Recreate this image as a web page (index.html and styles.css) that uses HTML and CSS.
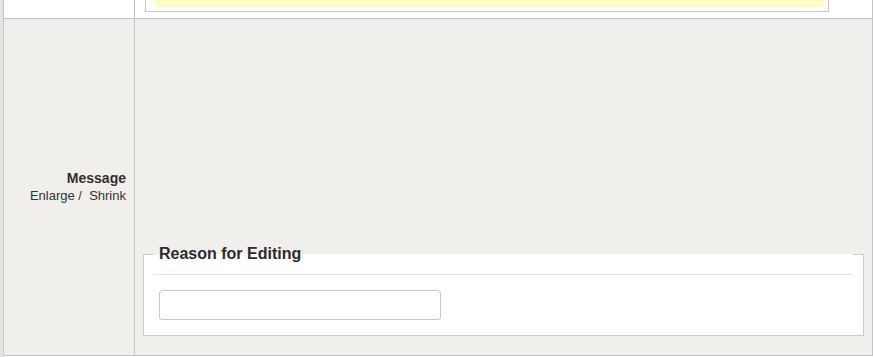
FILE: index.html
```html
<!DOCTYPE html>
<html lang="en">
<head>
<meta charset="utf-8">
<title>Edit post</title>
<link rel="stylesheet" href="styles.css">
</head>
<body>
<div class="form-table">
  <div class="row row-top">
    <div class="label-cell"></div>
    <div class="field-cell">
      <div class="notice-box">
        <div class="notice">Allowed file types <span class="hint">(jpg)</span></div>
      </div>
    </div>
  </div>
  <div class="row row-message">
    <div class="label-cell">
      <div class="label-title">Message</div>
      <div class="size-links"><a class="size-link" href="#">Enlarge</a> /&nbsp; <a class="size-link" href="#">Shrink</a></div>
    </div>
    <div class="field-cell">
      <div class="editor"></div>
      <fieldset class="reason">
        <legend class="reason-legend">Reason for Editing</legend>
        <input class="reason-input" type="text">
      </fieldset>
    </div>
  </div>
</div>
</body>
</html>
```

FILE: styles.css
```css
html, body {
  margin: 0;
  padding: 0;
}

body {
  background: #ffffff;
  font-family: "Liberation Sans", Arial, Helvetica, sans-serif;
  color: #333333;
  width: 873px;
  height: 357px;
  overflow: hidden;
  border-left: 3px solid #e4e4e4;
  box-sizing: border-box;
}

.form-table {
  width: 870px;
  box-sizing: border-box;
  border-left: 1px solid #c4c4c4;
  border-right: 1px solid #c4c4c4;
}

.row {
  display: flex;
  border-bottom: 1px solid #c4c4c4;
}

.label-cell {
  width: 130px;
  flex: none;
  border-right: 1px solid #c4c4c4;
  box-sizing: content-box;
}

.field-cell {
  flex: 1;
  min-width: 0;
}

/* top row (scrolled partially out of view) */
.row-top {
  height: 18px;
  overflow: hidden;
  background: #ffffff;
}

.notice-box {
  margin: -32px 43px 0 10px;
  border: 1px solid #c6c6c6;
  background: #ffffff;
  padding: 8px 2px 4px 8px;
}

.notice {
  background: #fefdc8;
  border-radius: 0 0 5px 5px;
  padding: 4px 8px 8px 110px;
  font-size: 12px;
  line-height: 18px;
  color: #9a5a4a;
}

.hint {
  color: #8a8a8a;
}

/* message row */
.row-message {
  height: 336px;
  background: #f0efeb;
}

.row-message .label-cell {
  display: flex;
  flex-direction: column;
  justify-content: center;
  align-items: flex-end;
  padding-right: 8px;
  width: 122px;
  text-align: right;
}

.label-title {
  font-size: 14px;
  font-weight: bold;
  line-height: 18px;
  color: #2f2f2f;
}

.size-links {
  font-size: 13px;
  line-height: 18px;
  color: #333333;
}

.size-link {
  color: #333333;
  text-decoration: none;
}

.row-message .field-cell {
  display: flex;
  flex-direction: column;
  padding: 0 8px 19px 8px;
}

.editor {
  flex: 1;
}

.reason {
  margin: 0;
  min-width: 0;
  border: 1px solid #cccccc;
  background: #ffffff;
  padding: 0 10px 15px 10px;
}

.reason-legend {
  display: block;
  width: 100%;
  box-sizing: border-box;
  padding: 10px 5px 10px 5px;
  border-bottom: 1px solid #e2e2e2;
  font-size: 16px;
  font-weight: bold;
  line-height: 20px;
  color: #2b2b2b;
}

.reason-input {
  display: block;
  margin: 15px 0 0 5px;
  width: 282px;
  height: 30px;
  box-sizing: border-box;
  border: 1px solid #c8c8c8;
  border-radius: 3px;
  background: #ffffff;
  padding: 4px 6px;
  font-family: inherit;
  font-size: 13px;
}
```
